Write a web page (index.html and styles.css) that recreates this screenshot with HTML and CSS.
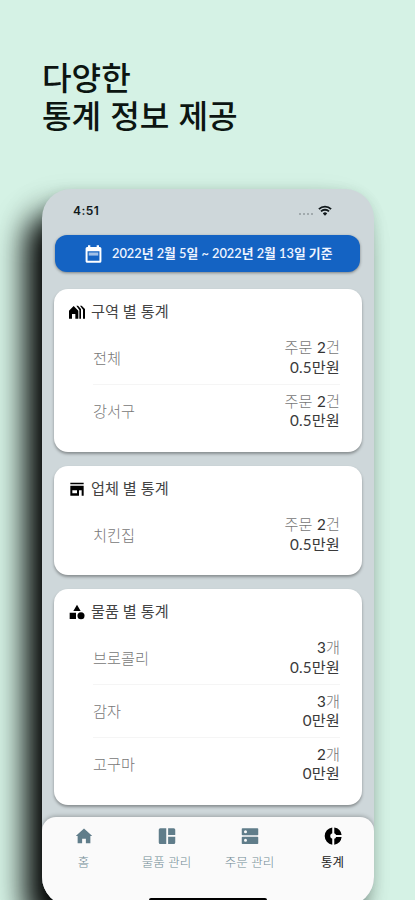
FILE: index.html
```html
<!DOCTYPE html>
<html lang="ko">
<head>
<meta charset="utf-8">
<title>통계</title>
<link rel="stylesheet" href="styles.css">
</head>
<body>
<h1 class="headline">다양한<br>통계 정보 제공</h1>
<main class="phone">
  <div class="status">
    <span class="time">4:51</span>
    <span class="signal"><i></i><i></i><i></i><i></i></span>
    <svg class="wifi" viewBox="0 0 14 11"><path d="M.9 4.1a8.8 8.8 0 0 1 12.2 0M3 6.4a5.8 5.8 0 0 1 8 0" fill="none" stroke="#10171a" stroke-width="1.9"/><path d="M4.8 8.4a3.2 3.2 0 0 1 4.4 0L7 10.8z" fill="#10171a"/></svg>
  </div>
  <div class="period">
    <svg class="calendar" viewBox="0 0 24 24"><path fill="#fff" fill-rule="evenodd" d="M20 3h-1V1h-3v2H8V1H5v2H4a2 2 0 0 0-2 2v16c0 1.100.9 2 2 2h16a2 2 0 0 0 2-2V5a2 2 0 0 0-2-2zM4.500 8.500h15V20.500h-15z"/><path fill="#fff" opacity=".6" d="M6 10h12v4H6z"/></svg>
    <span>2022년 2월 5일 ~ 2022년 2월 13일 기준</span>
  </div>
  <section class="card">
    <h2 class="title"><svg class="icon" viewBox="0 0 24 24"><path d="M7 3 0 10v12h4.500v-7h5v7H14V10zM11 2.500h2.500L18 7.500V22h-2.500V9zM16.500 2.500H19l5 5V22h-3V8.500z"/></svg>구역 별 통계</h2>
    <div class="rows">
      <div class="row"><span class="name">전체</span><span class="value"><span class="count">주문 <b>2</b>건</span><span>0.5만원</span></span></div>
      <div class="row"><span class="name">강서구</span><span class="value"><span class="count">주문 <b>2</b>건</span><span>0.5만원</span></span></div>
    </div>
  </section>
  <section class="card">
    <h2 class="title"><svg class="icon" viewBox="0 0 24 24"><path fill-rule="evenodd" d="M2 2.500h20V5H2zM2 7h20v15h-3v-8h-4v8H2zM5 14v4.500h7V14z"/></svg>업체 별 통계</h2>
    <div class="rows">
      <div class="row"><span class="name">치킨집</span><span class="value"><span class="count">주문 <b>2</b>건</span><span>0.5만원</span></span></div>
    </div>
  </section>
  <section class="card">
    <h2 class="title"><svg class="icon" viewBox="0 0 24 24"><path d="M12 1 17.500 10.500h-11zM1 13h9.500v9.500H1z"/><circle cx="18" cy="17.500" r="5.300"/></svg>물품 별 통계</h2>
    <div class="rows">
      <div class="row"><span class="name">브로콜리</span><span class="value"><span class="count"><b>3</b>개</span><span>0.5만원</span></span></div>
      <div class="row"><span class="name">감자</span><span class="value"><span class="count"><b>3</b>개</span><span>0만원</span></span></div>
      <div class="row"><span class="name">고구마</span><span class="value"><span class="count"><b>2</b>개</span><span>0만원</span></span></div>
    </div>
  </section>
  <nav class="tabs">
    <a class="tab"><svg viewBox="0 0 24 24"><path d="M9.500 21.500v-6h5v6h6V12H23L12 2 1 12h2.500v9.500z"/></svg>홈</a>
    <a class="tab"><svg viewBox="0 0 24 24"><path d="M11 22.500H3a2 2 0 0 1-2-2v-17a2 2 0 0 1 2-2h8zM13.500 22.500H21a2 2 0 0 0 2-2V13h-9.500zM23 10.500v-7a2 2 0 0 0-2-2h-7.500v9z"/></svg>물품 관리</a>
    <a class="tab"><svg viewBox="0 0 24 24"><path fill-rule="evenodd" d="M2 13h20q1 0 1 1v7.500q0 1-1 1H2q-1 0-1-1V14q0-1 1-1zM6 19.700a2 2 0 1 0 0-4 2 2 0 0 0 0 4zM2 1.500h20q1 0 1 1V10q0 1-1 1H2q-1 0-1-1V2.500q0-1 1-1zM6 8.200a2 2 0 1 0 0-4 2 2 0 0 0 0 4z"/></svg>주문 관리</a>
    <a class="tab active"><svg viewBox="0 0 24 24"><path d="M11 8.200V.5a11.600 11.600 0 0 0 0 23v-7.700a4 4 0 0 1 0-7.600zM13.700 8.200V.5A11.600 11.600 0 0 1 23.500 10.700h-7.300a4 4 0 0 0-2.500-2.500zM13.700 15.800v7.700a11.600 11.600 0 0 0 9.800-10.200h-7.300a4 4 0 0 1-2.500 2.500z"/></svg>통계</a>
  </nav>
</main>
</body>
</html>
```
FILE: styles.css
```css
* { box-sizing: border-box; }

body {
  margin: 0;
  height: 900px;
  overflow: hidden;
  background: #d5f2e5;
  font-family: Lato, "Noto Sans CJK KR", sans-serif;
  color: #3a3a3a;
}

.headline {
  margin: 0;
  padding: 57px 0 0 42px;
  height: 189px;
  font: 500 32.2px/38px "Noto Sans CJK KR", sans-serif;
  color: #0c1511;
}

.phone {
  width: 332px;
  height: 717px;
  margin-left: 42px;
  display: flex;
  flex-direction: column;
  overflow: hidden;
  background: #ced7da;
  border-radius: 29px;
  box-shadow: -18px 24px 30px -2px #000, -14px 14px 34px rgba(0, 40, 30, .12), 0 2px 12px rgba(0, 60, 40, .1);
}

.status {
  height: 46px;
  flex: none;
  display: flex;
  align-items: center;
  padding: 0 42px 2px 31px;
}

.time {
  flex: 1;
  font: 600 12px/16px Inter, sans-serif;
  letter-spacing: .5px;
  color: #11191c;
}

.signal {
  display: flex;
  gap: 2px;
  margin: 6px 5px 0 0;
}

.signal i {
  width: 2px;
  height: 2px;
  border-radius: 1px;
  background: #929b9e;
}

.wifi { width: 14px; height: 11px; margin-top: -2px; }

.period {
  flex: none;
  height: 37px;
  margin: 0 14px 17px 13px;
  padding: 0 0 0 29px;
  display: flex;
  align-items: center;
  gap: 9px;
  border-radius: 12px;
  background: #1463c3;
  box-shadow: 0 1px 3px rgba(0, 0, 0, .4);
  color: #eef4ff;
  font-size: 12.8px;
  font-weight: 600;
  white-space: nowrap;
}

.period span { padding-bottom: 2px; }

.calendar { width: 19px; height: 20px; }

.card {
  flex: none;
  margin: 0 12px 14px;
  padding-bottom: 15px;
  border-radius: 14px;
  background: #fff;
  box-shadow: 0 2px 3px rgba(0, 0, 0, .34);
}

.card + .card { padding-bottom: 14px; }
.card:nth-of-type(3) { padding-bottom: 15px; }

.title {
  height: 42px;
  margin: 0;
  padding: 0 0 1px 15px;
  display: flex;
  align-items: center;
  gap: 6px;
  font-size: 15.2px;
  font-weight: 400;
  color: #444;
}

.icon { width: 16px; height: 16px; margin-top: 4px; fill: #000; }

.rows { padding: 0 22px 0 39px; }

.row {
  height: 53px;
  display: flex;
  align-items: center;
  justify-content: space-between;
  font-size: 15.2px;
}

.row + .row { border-top: 1px solid #f5f5f5; }

.name { color: #777; font-weight: 300; padding-bottom: 2px; }

.value {
  display: flex;
  flex-direction: column;
  align-items: flex-end;
  line-height: 19.5px;
  letter-spacing: .15px;
}

.count { color: #777; font-weight: 300; }
.count b { color: #333; font-weight: 400; }

.tabs {
  flex: none;
  height: 90px;
  margin-top: -2px;
  padding-top: 10px;
  display: grid;
  grid-template-columns: repeat(4, 1fr);
  position: relative;
  background: #fafafa;
  border-radius: 14px 14px 0 0;
  box-shadow: 0 -1px 4px rgba(0, 0, 0, .25);
}

.tabs::after {
  content: "";
  position: absolute;
  left: 107px;
  top: 81px;
  width: 118px;
  height: 4px;
  border-radius: 2px;
  background: #000;
}

.tab {
  display: flex;
  flex-direction: column;
  align-items: center;
  gap: 8px;
  font-size: 12.5px;
  line-height: 20px;
  font-weight: 300;
  color: #718a94;
}

.tab svg { width: 18px; height: 18px; fill: #607d8a; }
.tab.active { color: #222; font-weight: 400; }
.tab.active svg { fill: #000; }
```
